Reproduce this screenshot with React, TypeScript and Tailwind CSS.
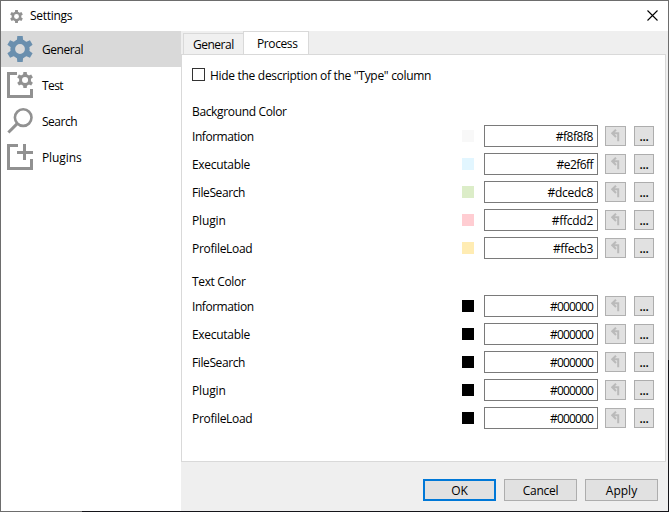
import React from 'react';

const TEETH = [0, 60, 120, 180, 240, 300];

function GearShape() {
  return (
    <>
      <circle cx="13" cy="13" r="7.300" fill="none" stroke="currentColor" strokeWidth="4.800" />
      {TEETH.map((a) => (
        <path key={a} d="M9.800 5 10.300 0H15.700L16.200 5Z" transform={`rotate(${a} 13 13)`} />
      ))}
    </>
  );
}

function Gear({ className }: { className: string }) {
  return (
    <svg viewBox="0 0 26 26" className={className} fill="currentColor">
      <GearShape />
    </svg>
  );
}

function TestIcon() {
  return (
    <svg viewBox="0 0 26 26" className="h-[26px] w-[26px] text-[#919191]" fill="currentColor">
      <path d="M0 0H10V3H3V23H23V17H26V26H0Z" />
      <g transform="translate(10 0) scale(.62)">
        <GearShape />
      </g>
    </svg>
  );
}

function SearchIcon() {
  return (
    <svg viewBox="0 0 26 26" className="h-[26px] w-[26px] text-[#919191]" fill="none" stroke="currentColor" strokeWidth="2.6">
      <circle cx="16.200" cy="9.600" r="8.300" />
      <path d="M10.200 15.600 1.400 24.500" strokeWidth="3" />
    </svg>
  );
}

function PluginIcon() {
  return (
    <svg viewBox="0 0 26 26" className="h-[26px] w-[26px] text-[#919191]" fill="currentColor">
      <path d="M0 0H11V3H3V23H23V15H26V26H0Z" />
      <path d="M16 0H19V7H26V10H19V16H16V10H10V7H16Z" />
    </svg>
  );
}

const nav = [
  { label: 'General', icon: <Gear className="h-[26px] w-[26px] text-[#6a8fae]" />, track: 'tracking-[-0.45px]' },
  { label: 'Test', icon: <TestIcon />, track: 'tracking-[-0.6px]' },
  { label: 'Search', icon: <SearchIcon />, track: 'tracking-[-0.5px]' },
  { label: 'Plugins', icon: <PluginIcon />, track: 'tracking-[-0.1px]' },
];

const rows = [
  { name: 'Information', track: 'tracking-[-0.45px]', bg: '#f8f8f8', bgTrack: 'tracking-[-0.45px]' },
  { name: 'Executable', track: 'tracking-[-0.3px]', bg: '#e2f6ff', bgTrack: 'tracking-[-0.55px]' },
  { name: 'FileSearch', track: 'tracking-[-0.4px]', bg: '#dcedc8', bgTrack: 'tracking-[-0.3px]' },
  { name: 'Plugin', track: 'tracking-[-0.15px]', bg: '#ffcdd2', bgTrack: 'tracking-[-0.25px]' },
  { name: 'ProfileLoad', track: 'tracking-[-0.3px]', bg: '#ffecb3', bgTrack: 'tracking-[-0.35px]' },
];

function ColorRow({ name, track, value, valueTrack }: { name: string; track: string; value: string; valueTrack: string }) {
  return (
    <div className="flex h-7 items-start">
      <span className={`w-[270px] pt-[2px] leading-5 ${track}`}>{name}</span>
      <span className="mt-[5px] h-3 w-3" style={{ backgroundColor: value }} />
      <div className={`ml-[10px] h-[22px] w-[114px] border border-[#7a7a7a] pr-[4px] text-right leading-[21px] ${valueTrack}`}>{value}</div>
      <button className="ml-[7px] mt-px flex h-5 w-[21px] items-center justify-center border border-[#b0b0b0] bg-[#e1e1e1] text-[#bababa]">
        <svg viewBox="0 0 10 14" className="h-[14px] w-[10px]" fill="none" stroke="currentColor" strokeWidth="2">
          <path d="M5 .8 1.200 4.200 5 8M1 4.200H7.200V12.200" />
        </svg>
      </button>
      <button className="ml-2 mt-px h-5 w-5 border border-[#adadad] bg-[#e1e1e1] pt-[2px] text-center font-semibold leading-4 tracking-[-0.3px]">...</button>
    </div>
  );
}

export default function App() {
  return (
    <div className="flex h-[512px] w-[669px] flex-col overflow-hidden bg-[linear-gradient(90deg,#6d6d6d_82px,#141419_82px)] font-['Open_Sans','Noto_Sans',sans-serif] text-[12px] text-black">
      <div className="flex h-[511px] bg-[linear-gradient(180deg,#6d6d6d_360px,#141419_360px)] pr-px">
        <div className="flex flex-1 flex-col border-l border-t border-[#6d6d6d] bg-white">
          <header className="flex h-[30px] shrink-0 items-center pl-[9px] pr-[10px]">
            <Gear className="h-[13px] w-[13px] text-[#919191]" />
            <span className="ml-[7px] tracking-[-0.3px]">Settings</span>
            <svg viewBox="0 0 11 11" className="mb-[2px] ml-auto h-[11px] w-[11px]" stroke="#000" strokeWidth="1.100">
              <path d="m.5.5 10 10m0-10-10 10" />
            </svg>
          </header>
          <div className="flex flex-1">
            <nav className="w-[180px]">
              {nav.map((n, i) => (
                <div key={n.label} className={`flex h-9 items-center pl-[6px] ${i === 0 ? 'bg-[#d9d9d9]' : ''}`}>
                  <span className="flex w-[27px]">{n.icon}</span>
                  <span className={`ml-2 pt-[2px] ${n.track}`}>{n.label}</span>
                </div>
              ))}
            </nav>
            <main className="flex flex-1 flex-col bg-[#efefef] pr-[2px]">
              <div className="flex h-6 items-end pl-[2px]">
                <div className="mb-px h-[21px] w-[60px] border border-b-0 border-r-0 border-[#d9d9d9] bg-[#f0f0f0] pl-[9px] leading-[21px] tracking-[-0.5px]">General</div>
                <div className="h-6 w-[66px] border border-b-0 border-[#d9d9d9] bg-white pl-[13px] leading-[24px] tracking-[-0.4px]">Process</div>
              </div>
              <section className="-mt-px h-[408px] border border-[#d9d9d9] bg-white pl-[10px] pt-[13px]">
                <div className="flex h-[13px] items-center">
                  <span className="h-[13px] w-[13px] border border-[#333]" />
                  <span className="ml-[5px] pt-[2px] tracking-[-0.3px]">Hide the description of the "Type" column</span>
                </div>
                <h2 className="mt-[21px] h-[23px] leading-[20px] tracking-[-0.35px]">Background Color</h2>
                {rows.map((r) => (
                  <ColorRow key={r.name} name={r.name} track={r.track} value={r.bg} valueTrack={r.bgTrack} />
                ))}
                <h2 className="mt-[7px] h-[23px] leading-[20px] tracking-[-0.35px]">Text Color</h2>
                {rows.map((r) => (
                  <ColorRow key={r.name} name={r.name} track={r.track} value="#000000" valueTrack="tracking-[-0.85px]" />
                ))}
              </section>
              <footer className="mt-[17px] flex justify-end gap-2 pr-2">
                <button className="h-[22px] w-[73px] border-2 border-[#0078d7] bg-[#e1e1e1] pt-[2px] leading-4 tracking-[-0.2px]">OK</button>
                <button className="h-[22px] w-[73px] border border-[#adadad] bg-[#e1e1e1] pt-[2px] leading-[18px] tracking-[-0.3px]">Cancel</button>
                <button className="h-[22px] w-[73px] border border-[#adadad] bg-[#e1e1e1] pt-[2px] leading-[18px]">Apply</button>
              </footer>
            </main>
          </div>
        </div>
      </div>
    </div>
  );
}
